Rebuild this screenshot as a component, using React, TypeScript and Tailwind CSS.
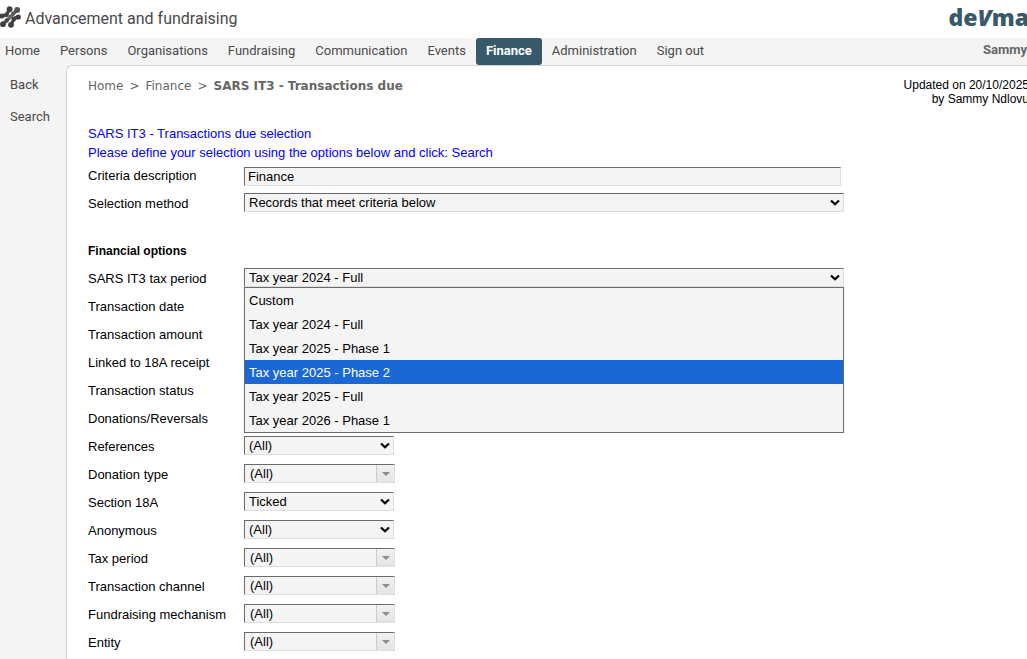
import { useState } from "react";

const navItems = ["Home", "Persons", "Organisations", "Fundraising", "Communication", "Events", "Finance", "Administration", "Sign out"];

const periods = [
  "Custom",
  "Tax year 2024 - Full",
  "Tax year 2025 - Phase 1",
  "Tax year 2025 - Phase 2",
  "Tax year 2025 - Full",
  "Tax year 2026 - Phase 1",
];

const plainRows = ["Transaction date", "Transaction amount", "Linked to 18A receipt", "Transaction status", "Donations/Reversals"];

type FilterRow = { label: string; value: string; kind: "select" | "combo" };

const filters: FilterRow[] = [
  { label: "References", value: "(All)", kind: "select" },
  { label: "Donation type", value: "(All)", kind: "combo" },
  { label: "Section 18A", value: "Ticked", kind: "select" },
  { label: "Anonymous", value: "(All)", kind: "select" },
  { label: "Tax period", value: "(All)", kind: "combo" },
  { label: "Transaction channel", value: "(All)", kind: "combo" },
  { label: "Fundraising mechanism", value: "(All)", kind: "combo" },
  { label: "Entity", value: "(All)", kind: "combo" },
];

const rowClass = "flex h-7 items-start pt-[3px]";
const labelClass = "w-[156px] shrink-0 pt-px";
const fieldClass =
  "h-[19px] border border-t-[#6b6b6b] border-l-[#6b6b6b] border-r-[#dedede] border-b-[#dedede] bg-[#f4f4f4] text-black outline-none";

function AppMark() {
  return (
    <svg width="21" height="22" viewBox="0 0 21 22" className="mb-1 shrink-0" aria-hidden="true">
      <g fill="none" stroke="#444444" strokeWidth="3.4" strokeLinecap="round" strokeLinejoin="round">
        <path d="M2 9.8 L6.5 9 L9.5 3.300" />
        <path d="M3.300 18 L6.800 14.300 L10.300 11.300 L13.300 7.500 L17 4.200" stroke="#5e5e5e" />
        <path d="M11 18.800 L14.300 12.300 L18.300 10.800" />
      </g>
      <g fill="#404040">
        <circle cx="1.800" cy="10" r="2.500" />
        <circle cx="6.500" cy="8.800" r="2.300" />
        <circle cx="9.600" cy="3.200" r="2.900" />
        <circle cx="3" cy="18.200" r="2.900" />
        <circle cx="6.800" cy="14.500" r="2.200" fill="#4c4c4c" />
        <circle cx="10.300" cy="11" r="2.300" fill="#6a6a6a" />
        <circle cx="13.200" cy="7.600" r="2.200" fill="#5a5a5a" />
        <circle cx="17.200" cy="4" r="2.900" fill="#555555" />
        <circle cx="11" cy="18.800" r="2.900" />
        <circle cx="14.200" cy="12.800" r="2.300" />
        <circle cx="18.300" cy="11" r="2.600" />
      </g>
    </svg>
  );
}

function Select({ id, options, value, onChange, className }: {
  id: string;
  options: string[];
  value: string;
  onChange?: (v: string) => void;
  className: string;
}) {
  return (
    <div className={`relative h-[19px] ${className}`}>
      <select
        id={id}
        value={value}
        onChange={(e) => onChange?.(e.target.value)}
        className={`${fieldClass} block w-full appearance-none pl-1 pr-5 leading-4`}
      >
        {options.map((o) => (
          <option key={o}>{o}</option>
        ))}
      </select>
      <svg className="pointer-events-none absolute right-1 top-1.5" width="10" height="8" viewBox="0 0 10 8" aria-hidden="true">
        <path d="M1 1.500 L5 5.300 L9 1.500" fill="none" stroke="#000" strokeWidth="2.200" />
      </svg>
    </div>
  );
}

function Combo({ id, value }: { id: string; value: string }) {
  return (
    <div className={`${fieldClass} flex w-[151px]`}>
      <input id={id} defaultValue={value} className="h-[17px] w-0 grow bg-transparent pl-[5px] outline-none" />
      <button
        type="button"
        aria-label="Open list"
        className="flex h-[17px] w-[18px] items-center justify-center border-l border-[#cccccc] bg-linear-to-b from-[#f2f2f2] to-[#e4e4e4]"
      >
        <svg width="8" height="4" viewBox="0 0 8 4" aria-hidden="true">
          <path d="M0 0 H8 L4 4 Z" fill="#8a8a8a" />
        </svg>
      </button>
    </div>
  );
}

export default function App() {
  const [period, setPeriod] = useState(periods[1]);
  const [active, setActive] = useState(3);

  return (
    <div className="flex h-screen flex-col overflow-hidden bg-white font-['Liberation_Sans',Arial,sans-serif] text-[13px] text-black">
      <header className="flex h-[38px] shrink-0 items-center justify-between">
        <div className="flex items-center gap-1 font-[Roboto,sans-serif] text-[16px] text-[#4a4a4a]">
          <AppMark />
          <h1>Advancement and fundraising</h1>
        </div>
        <span className="-mr-0.5 pb-1 font-['Open_Sans',sans-serif] text-[23px] leading-8 font-extrabold text-[#375a6a]">
          de<i>V</i>ma
        </span>
      </header>

      <div className="flex h-[27px] shrink-0 items-stretch justify-between bg-[#f4f4f4] font-[Roboto,sans-serif] text-[#4a4a4a]">
        <nav className="-ml-[5px] flex items-stretch">
          {navItems.map((item) => (
            <a
              key={item}
              href="#"
              className={
                item === "Finance"
                  ? "flex items-center rounded-[3px] bg-[#375a6a] px-2.5 pb-0.5 font-bold text-white"
                  : "flex items-center px-2.5 pb-0.5"
              }
            >
              {item}
            </a>
          ))}
        </nav>
        <span className="flex items-center pb-1 font-bold text-[#666666]">Sammy</span>
      </div>

      <div className="flex min-h-0 grow bg-[#f4f4f4]">
        <aside className="flex w-[66px] shrink-0 flex-col gap-3 pt-2.5 pl-2.5 font-[Roboto,sans-serif] leading-5 text-[#4a4a4a]">
          <a href="#">Back</a>
          <a href="#">Search</a>
        </aside>

        <main className="min-w-0 grow rounded-tl-md border-t border-l border-[#d4d4d4] bg-white pl-[21px]">
          <div className="flex h-[58px] items-start justify-between pt-2.5">
            <div className="flex gap-1.5 font-['DejaVu_Sans',Verdana,sans-serif] text-[12px] leading-5 text-[#666666]">
              <a href="#">Home</a>
              <span>&gt;</span>
              <a href="#">Finance</a>
              <span>&gt;</span>
              <strong>SARS IT3 - Transactions due</strong>
            </div>
            <p className="-mr-0.5 pt-0.5 text-right text-[12px] leading-[14px]">
              Updated on 20/10/2025
              <br />
              by Sammy Ndlovu
            </p>
          </div>

          <p className="leading-[19px] text-[#0000ff]">
            SARS IT3 - Transactions due selection
            <br />
            Please define your selection using the options below and click: Search
          </p>

          <form className="leading-5" onSubmit={(e) => e.preventDefault()}>
            <div className={rowClass}>
              <label htmlFor="criteria" className={labelClass}>Criteria description</label>
              <input id="criteria" defaultValue="Finance" className={`${fieldClass} mt-0.5 w-[597px] px-[3px]`} />
            </div>
            <div className={rowClass}>
              <label htmlFor="method" className={labelClass}>Selection method</label>
              <Select id="method" options={["Records that meet criteria below"]} value="Records that meet criteria below" className="w-[600px]" />
            </div>

            <h2 className="mt-[19px] h-7 pt-1 text-[12px] font-bold">Financial options</h2>

            <div className={rowClass}>
              <label htmlFor="period" className={labelClass}>SARS IT3 tax period</label>
              <div className="relative">
                <Select id="period" options={periods} value={period} onChange={setPeriod} className="w-[600px]" />
                <ul role="listbox" aria-label="SARS IT3 tax period" className="absolute top-[19px] left-0 z-10 w-[600px] border border-[#6b6b6b] bg-[#f4f4f4]">
                  {periods.map((p, i) => (
                    <li
                      key={p}
                      role="option"
                      aria-selected={i === active}
                      onMouseEnter={() => setActive(i)}
                      onClick={() => setPeriod(p)}
                      className={i === active ? "h-6 bg-[#1a68d6] pl-1 leading-[26px] text-white" : "h-6 pl-1 leading-[26px]"}
                    >
                      {p}
                    </li>
                  ))}
                </ul>
              </div>
            </div>

            {plainRows.map((label) => (
              <div key={label} className={rowClass}>
                <span className={labelClass}>{label}</span>
              </div>
            ))}

            {filters.map(({ label, value, kind }) => {
              const id = label.toLowerCase().replace(/ /g, "-");
              return (
                <div key={label} className={rowClass}>
                  <label htmlFor={id} className={labelClass}>{label}</label>
                  {kind === "select" ? (
                    <Select id={id} options={[value]} value={value} className="w-[150px]" />
                  ) : (
                    <Combo id={id} value={value} />
                  )}
                </div>
              );
            })}
          </form>
        </main>
      </div>
    </div>
  );
}
